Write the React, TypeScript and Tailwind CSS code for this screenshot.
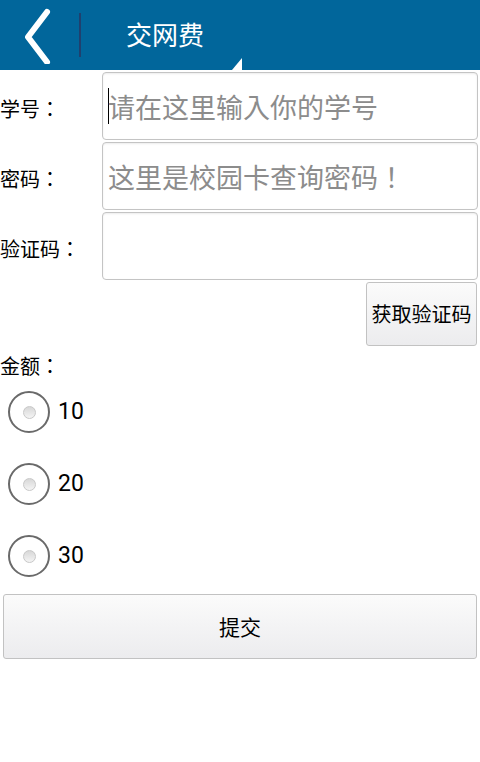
import React, { useState } from 'react';

const font = { fontFamily: '"Noto Sans CJK TC", "Noto Sans", Roboto, sans-serif' };

const Field: React.FC<{ label: string; placeholder?: string; cursor?: boolean }> = ({ label, placeholder, cursor }) => (
  <div className="flex items-center h-[70px]">
    <div className="w-[102px] text-[20px] text-black pt-[5px]">{label}</div>
    <div className="relative flex-1 mr-[2px] h-[68px] rounded-[4px] border border-[#c4c4c4] bg-white shadow-[inset_0_1px_2px_rgba(0,0,0,0.08)] flex items-center pl-[5px]">
      {cursor && <span className="w-px h-[36px] bg-black mr-[-1px]" />}
      <span className="text-[27px] text-[#8c8c8c] leading-none">{placeholder}</span>
    </div>
  </div>
);

const Radio: React.FC<{ value: string; checked: boolean; onClick: () => void }> = ({ value, checked, onClick }) => (
  <div className="flex items-center h-[72px] pl-[8px] cursor-pointer" onClick={onClick}>
    <div className="w-[42px] h-[42px] rounded-full border-[2px] border-[#6a6a6a] flex items-center justify-center">
      <div className={`w-[13px] h-[13px] rounded-full border border-[#c8c8c8] ${checked ? 'bg-[#33b5e5]' : 'bg-gradient-to-b from-[#d8d8d8] to-[#f4f4f4]'}`} />
    </div>
    <span className="ml-[8px] text-[23px] text-black" style={{ fontFamily: 'Roboto, "Noto Sans", sans-serif' }}>{value}</span>
  </div>
);

export default function App() {
  const [amount, setAmount] = useState('');
  return (
    <div className="w-[480px] h-[762px] bg-white overflow-hidden" style={font}>
      <header className="h-[70px] bg-[#01669b] flex items-center relative">
        <svg width="40" height="60" viewBox="0 0 40 60" className="ml-[16px] -mt-[2px]">
          <path d="M31 8 L12 33 L31 58" fill="none" stroke="white" strokeWidth="6" strokeLinecap="round" strokeLinejoin="round" />
        </svg>
        <div className="ml-[23px] w-[2px] h-[44px] bg-[#20406e]" />
        <h1 className="ml-[45px] text-[26px] text-white leading-none -mt-[3px]">交网费</h1>
        <svg width="10" height="12" viewBox="0 0 10 12" className="absolute left-[232px] bottom-0">
          <polygon points="10,0 10,12 0,12" fill="white" />
        </svg>
      </header>
      <div className="pt-[1px]">
        <Field label="学号：" placeholder="请在这里输入你的学号" cursor />
        <Field label="密码：" placeholder="这里是校园卡查询密码！" />
        <Field label="验证码：" />
      </div>
      <div className="flex justify-end pr-[3px] mt-[1px]">
        <button className="w-[111px] h-[64px] rounded-[3px] border border-[#c2c2c2] bg-gradient-to-b from-[#fbfbfb] to-[#ececee] text-[20px] text-black">获取验证码</button>
      </div>
      <div className="text-[20px] text-black leading-[30px] mt-[5px]">金额：</div>
      <div className="-mt-[5px]">
        {['10', '20', '30'].map(v => (
          <Radio key={v} value={v} checked={amount === v} onClick={() => setAmount(v)} />
        ))}
      </div>
      <div className="px-[3px] mt-[2px]">
        <button className="w-full h-[65px] rounded-[3px] border border-[#c2c2c2] bg-gradient-to-b from-[#fbfbfb] to-[#ececee] text-[21px] text-black">提交</button>
      </div>
    </div>
  );
}
